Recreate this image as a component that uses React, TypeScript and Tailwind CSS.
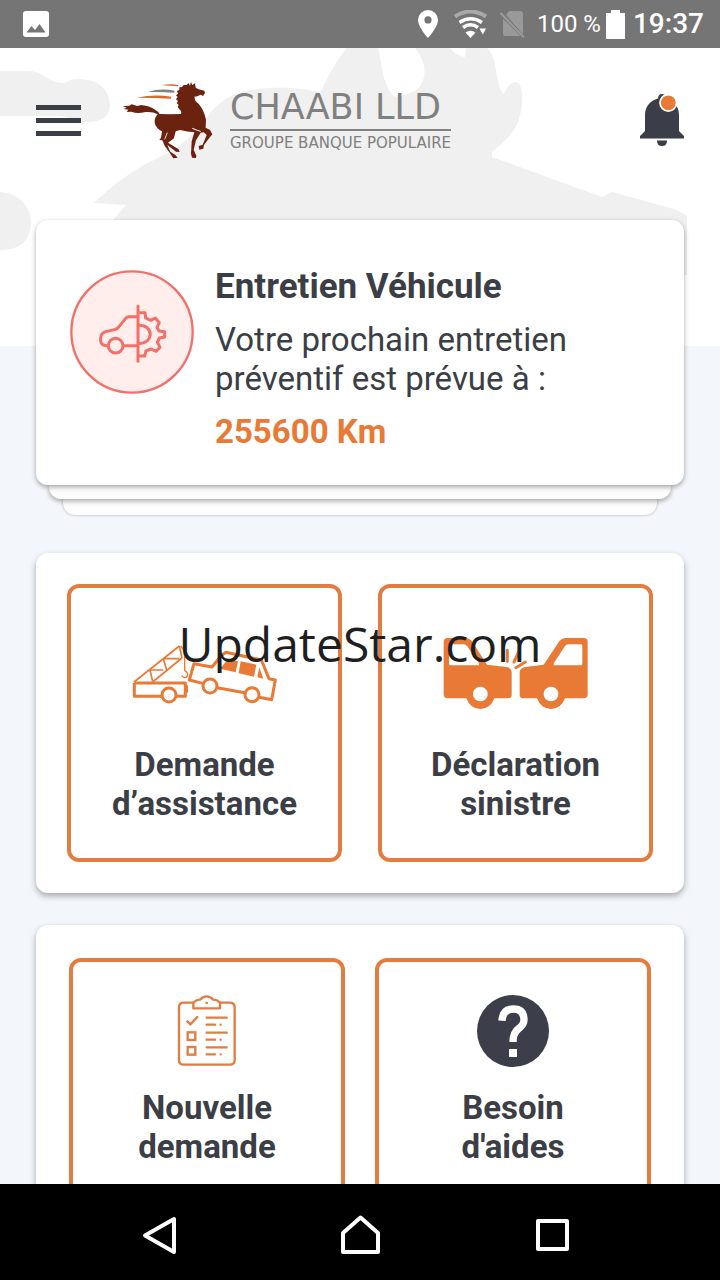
import type { ReactNode } from "react"

type Tile = {
	id: string
	lines: [string, string]
	icon: ReactNode
}

const emergencyTiles: Tile[] = [
	{ id: "assistance", lines: ["Demande", "d’assistance"], icon: <TowIcon /> },
	{ id: "sinistre", lines: ["Déclaration", "sinistre"], icon: <CrashIcon /> },
]

const serviceTiles: Tile[] = [
	{ id: "demande", lines: ["Nouvelle", "demande"], icon: <ClipboardIcon /> },
	{ id: "aide", lines: ["Besoin", "d'aides"], icon: <HelpIcon /> },
]

export default function App() {
	return (
		<div className="relative flex h-screen flex-col overflow-hidden bg-[#f3f6fa] font-['Roboto',sans-serif] text-[#3c3e46]">
			<StatusBar />
			<main className="relative min-h-0 flex-1 overflow-hidden">
				<HeaderArt />
				<div className="relative">
					<Header />
					<div className="px-9 pt-7">
						<MaintenanceCard />
						<section className="mt-[38px] grid grid-cols-2 gap-9 rounded-xl bg-white p-[31px] shadow-[0_3px_6px_rgba(0,0,0,0.32)]">
							{emergencyTiles.map((tile) => (
								<TileButton key={tile.id} tile={tile} className="gap-[35px] pt-12 pb-[35px]" />
							))}
						</section>
						<section className="mt-8 grid grid-cols-2 gap-[30px] rounded-xl bg-white p-[33px] shadow-[0_3px_6px_rgba(0,0,0,0.32)]">
							{serviceTiles.map((tile) => (
								<TileButton key={tile.id} tile={tile} className="gap-5 pt-8 pb-[35px]" />
							))}
						</section>
					</div>
				</div>
			</main>
			<NavigationBar />
			<div className="pointer-events-none absolute inset-0 flex items-center justify-center pt-2">
				<span className="font-['Open_Sans',sans-serif] text-[48px] leading-[72px] text-[#1f1f1f]">UpdateStar.com</span>
			</div>
		</div>
	)
}

function StatusBar() {
	return (
		<div className="flex h-12 shrink-0 items-center bg-[#757575] pr-4 pl-[23px] text-white">
			<svg className="size-[26px]" viewBox="0 0 26 26">
				<rect width="26" height="26" rx="3" fill="#fff" />
				<path d="M3.5 21.5 8.5 15l3.500 4L16.500 13l6 8.500z" fill="#757575" />
			</svg>
			<svg className="ml-auto h-7 w-5" viewBox="0 0 20 28" fill="#fff">
				<path
					fillRule="evenodd"
					d="M10 0a10 10 0 0 0-10 10c0 7 10 18 10 18s10-11 10-18A10 10 0 0 0 10 0zm0 6.300a3.600 3.600 0 1 1 0 7.200 3.600 3.600 0 0 1 0-7.200z"
				/>
			</svg>
			<svg className="ml-4 h-7 w-[33px]" viewBox="0 0 33 28" fill="none">
				<path d="M1 6.500Q16.500-3.500 32 6.500" stroke="#a9a9a9" strokeWidth="4" />
				<path d="M5.500 12.500Q16.500 5 28 12.500" stroke="#fff" strokeWidth="3.500" />
				<path d="M9 17.500Q16.500 12 24 17.500" stroke="#fff" strokeWidth="3.500" />
				<path d="M11.500 22.500Q16.500 19 21.500 22.500L16.500 28z" fill="#fff" />
				<path d="M25.500 18.500h6.500l-3.200 6z" fill="#fff" />
			</svg>
			<svg className="ml-3 h-7 w-[26px]" viewBox="0 0 26 28">
				<path d="M10 1h11a3 3 0 0 1 3 3v20.500L7 5zM4 8.500 21.500 26H6a2 2 0 0 1-2-2z" fill="#999" />
				<path d="M1.500 3 25 27.500" stroke="#999" strokeWidth="2.200" />
			</svg>
			<span className="ml-3 text-[24px] leading-7">100 %</span>
			<svg className="ml-[5px] h-[29px] w-[19px]" viewBox="0 0 19 29" fill="#fff">
				<path d="M5 0h9v3h5v26H0V3h5z" />
			</svg>
			<span className="ml-2 font-medium text-[28px] leading-8">19:37</span>
		</div>
	)
}

function HeaderArt() {
	return (
		<div className="absolute inset-x-0 top-0 bg-white">
			<svg className="w-full" viewBox="0 0 720 298" fill="#f0f0f0" aria-hidden="true">
				<path d="M0 23H30C44 24 47 34 62 35C70 35 68 30 80 31C98 32 109 40 110 57C110 70 98 75 84 74C74 74 70 68 58 68H0z" />
				<path d="M0 144C18 145 31 158 31 175C31 192 20 202 0 202z" />
				<path
					fillRule="evenodd"
					d="M94 155C115 135 132 122 160 109C180 100 196 85 208 68C222 49 240 41 270 40C290 39 305 41 320 44C328 31 334 14 347 0H450Q456 8 465 9L466 0H487C498 10 494 31 503 46C508 43 506 35 516 34C526 38 522 63 518 74C513 87 502 96 492 104V109L602 149L612 144L674 161Q687 166 687 170V227H60L113 172L126 157zM378 0C382 16 382 34 392 46C398 53 407 45 415 43C425 36 426 24 423 14Q420 6 415 0z"
				/>
			</svg>
		</div>
	)
}

function Header() {
	return (
		<header className="flex h-36 items-center px-9">
			<button type="button" aria-label="Menu" className="flex w-[45px] flex-col gap-2">
				<span className="h-[5px] bg-[#3c3e46]" />
				<span className="h-[5px] bg-[#3c3e46]" />
				<span className="h-[5px] bg-[#3c3e46]" />
			</button>
			<div className="ml-[41px] flex items-center gap-4 text-[#808080]">
				<HorseLogo />
				<div className="font-['DejaVu_Sans',sans-serif]">
					<div className="border-[#808080] border-b-2 pb-1 text-[35px] leading-9">CHAABI LLD</div>
					<div className="mt-1 text-[15px] leading-4">GROUPE BANQUE POPULAIRE</div>
				</div>
			</div>
			<button type="button" aria-label="Notifications" className="ml-auto">
				<svg className="h-[52px] w-11" viewBox="0 0 44 52">
					<path
						d="M22 0c-2.500 0-4 2-4 4.500C10 6.500 5 13 5 21v16l-5 5v2.500h44V42l-5-5V21c0-8-5-14.500-13-16.500C26 2 24.500 0 22 0z"
						fill="#3b3d49"
					/>
					<path d="M17 46.500h10q0 5.500-5 5.500t-5-5.500z" fill="#3b3d49" />
					<circle cx="28.300" cy="8.800" r="8.300" fill="#e87a36" stroke="#fff" strokeWidth="1.800" />
				</svg>
			</button>
		</header>
	)
}

function HorseLogo() {
	return (
		<svg className="h-[78px] w-[92px]" viewBox="36 30 276 234">
			<path d="M156 43Q180 36 206 43Q204 48 196 45z" fill="#d9652a" />
			<path d="M114 63Q150 51 194 59L192 65Q160 62 114 63z" fill="#7f8487" />
			<path d="M81 80Q130 69 184 77L183 83Q130 80 81 80z" fill="#e0692a" />
			<path
				d="M38 106L58 104L65 100L82 105L94 102Q120 105 132 114Q145 122 149 129Q178 130 213 129Q216 121 208 115L203 107L206 102L200 96L204 91L198 84L203 79L198 73L204 68L201 60L208 57L208 49L216 48L221 42L229 42L236 37L240 44L243 33L247 42L255 37L257 50L266 55L283 59L285 66L279 75L272 71L262 76L253 77L256 89L267 100Q283 120 288 146L287 170L300 177L307 190L296 203L282 222L280 233L268 236L266 225L278 221L290 192L281 184L272 185L258 208L251 236L259 254L258 261L246 260L243 248L244 230L245 211L253 184Q232 183 210 177L197 181L192 202L174 215L190 225L206 235L209 243L198 242L172 222L181 242L196 252L203 260L190 262L180 247L164 224L157 208L148 207L153 200L156 181Q137 171 134 155Q132 142 143 130Q128 121 107 123Q80 129 65 122L50 123L55 116L41 114L50 110z"
				fill="#6b2310"
			/>
			<path d="M247 172L262 178L272 181" stroke="#fff" strokeWidth="3" fill="none" />
			<path d="M172 185L164 205" stroke="#fff" strokeWidth="2.500" />
		</svg>
	)
}

function MaintenanceCard() {
	return (
		<section>
			<div className="relative z-20 flex gap-[21px] rounded-xl bg-white pt-[47px] pr-6 pb-[34px] pl-[34px] shadow-[0_2px_5px_rgba(0,0,0,0.35)]">
				<CarServiceIcon />
				<div className="text-[33px] leading-[39px]">
					<h2 className="font-bold text-[35px]">Entretien Véhicule</h2>
					<p className="mt-[14px]">
						Votre prochain entretien
						<br />
						préventif est prévue à :
					</p>
					<p className="mt-[14px] font-bold text-[#e87a36]">255600 Km</p>
				</div>
			</div>
			{/* edges of the cards stacked underneath */}
			<div className="relative z-10 mx-[13px] h-[14px] rounded-b-xl bg-[#fcfcfc] shadow-[0_2px_5px_rgba(0,0,0,0.35)]" />
			<div className="mx-[27px] h-4 rounded-b-xl bg-[#fcfcfc] shadow-[0_0_3px_rgba(0,0,0,0.3)]" />
		</section>
	)
}

function TileButton({ tile, className }: { tile: Tile; className: string }) {
	return (
		<button
			type="button"
			className={`flex flex-col items-center rounded-xl border-4 border-[#e27c40] font-bold text-[33px] leading-[39px] ${className}`}
		>
			{tile.icon}
			<span>
				{tile.lines[0]}
				<br />
				{tile.lines[1]}
			</span>
		</button>
	)
}

function CarServiceIcon() {
	return (
		<svg
			className="mt-[3px] size-[124px] shrink-0"
			viewBox="30 30 372 372"
			fill="none"
			stroke="#f27068"
			strokeWidth="9"
			strokeLinecap="round"
			strokeLinejoin="round"
		>
			<circle cx="216" cy="216" r="182" fill="#ffeeec" strokeWidth="7" />
			<path d="M234 138V304" />
			<path d="M232 170H206Q201 170 197 175L177 200Q173 206 166 208L137 215Q122 220 122 234V244Q124 256 138 257H144M191 257H232" />
			<circle cx="167" cy="257" r="22" />
			<path d="M236 158H255L257 174L272 181L286 174L298 188L291 202L297 213L314 215V231L298 234L292 247L300 262L288 274L273 267L258 273L254 288H236" />
			<path d="M236 196Q268 196 271 224Q268 250 236 251" />
		</svg>
	)
}

function TowIcon() {
	return (
		<svg className="h-[74px] w-[150px]" viewBox="30 46 450 222" fill="none" stroke="#e87a36">
			<path d="M42 184L178 76M98 184L186 112M90 148L98 182M90 148H130M130 114L140 148M132 114H178M178 76L186 112" strokeWidth="5" />
			<path d="M182 76L194 90V150Q206 156 202 166Q194 176 185 165" strokeWidth="4" />
			<path d="M43 187H196V227H170M125 227H43z" strokeWidth="9" strokeLinejoin="round" />
			<path d="M43 187V227" strokeWidth="9" />
			<path d="M200 194V216" strokeWidth="8" />
			<circle cx="147" cy="223" r="21" strokeWidth="9" />
			<path
				d="M248 188L208 178L222 129L276 139L303 106L318 95L424 118L447 174L466 178L455 237L418 230M374 216L292 201"
				strokeWidth="9"
				strokeLinejoin="round"
			/>
			<circle cx="270" cy="196" r="21" strokeWidth="9" />
			<circle cx="396" cy="222" r="21" strokeWidth="9" />
			<path d="M300 144L324 116L354 122L347 155zM362 122L409 132L402 168L356 158zM418 140L430 174L412 170z" fill="#e87a36" stroke="none" />
		</svg>
	)
}

function CrashIcon() {
	return (
		<svg className="h-[74px] w-[150px]" viewBox="184 48 450 222" fill="#e87a36">
			<path
				fillRule="evenodd"
				d="M204 54H260Q272 56 280 68L322 134L380 141Q396 144 396 158V224Q396 235 384 235H344Q332 267 302 267Q272 267 260 235H204Q192 235 192 223V66Q192 54 204 54zM212 73Q208 73 208 78V131Q208 136 213 136H294Q300 136 297 128L262 78Q258 73 252 73zM302 200a22 22 0 1 0 .1 0z"
			/>
			<path
				fillRule="evenodd"
				d="M612 54H556Q544 56 536 68L492 134L436 141Q420 144 420 158V224Q420 235 432 235H472Q484 267 514 267Q544 267 556 235H612Q624 235 624 223V66Q624 54 612 54zM604 73Q608 73 608 78V131Q608 136 603 136H526Q520 136 523 128L556 78Q560 73 566 73zM514 200a22 22 0 1 0 .1 0z"
			/>
			<path d="M383 91V124M416 98L403 126M437 126L409 143" stroke="#e87a36" strokeWidth="9" strokeLinecap="round" />
		</svg>
	)
}

function ClipboardIcon() {
	return (
		<svg className="size-[74px]" viewBox="31 40 222 222" fill="none" stroke="#e27c40" strokeWidth="7" strokeLinecap="round">
			<path d="M101 66H72Q58 66 58 80V238Q58 252 72 252H210Q225 252 225 238V80Q225 66 210 66H181" />
			<path d="M101 83V66Q108 58 121 57Q130 47 141 47T161 57Q174 58 181 66V83z" strokeLinejoin="round" />
			<circle cx="141" cy="67" r="4" fill="#e27c40" stroke="none" />
			<path d="M83 122L92 131L113 109" />
			<rect x="84" y="155" width="23" height="23" />
			<rect x="84" y="199" width="23" height="23" />
			<path d="M141 111H201M141 132H166M183 132h.1M141 156H201M141 177H166M183 177h.1M141 200H201M141 221H166M183 221h.1" />
		</svg>
	)
}

function HelpIcon() {
	return (
		<svg className="size-[74px]" viewBox="48 42 222 222">
			<circle cx="159" cy="153" r="108" fill="#3c3e49" />
			<path d="M126 122Q128 87 160 87Q192 87 192 120Q192 133 177 145Q159 158 159 186" fill="none" stroke="#fff" strokeWidth="22" />
			<path d="M147 207h24v24h-24z" fill="#fff" />
		</svg>
	)
}

function NavigationBar() {
	return (
		<nav className="flex h-24 shrink-0 items-center justify-between bg-black px-[136px]">
			<button type="button" aria-label="Retour">
				<svg className="size-12" viewBox="0 0 48 48" fill="none" stroke="#fff" strokeWidth="4" strokeLinejoin="round">
					<path d="M38 11V44L9 27.500z" />
				</svg>
			</button>
			<button type="button" aria-label="Accueil">
				<svg className="size-12" viewBox="0 0 48 48" fill="none" stroke="#fff" strokeWidth="4" strokeLinejoin="round">
					<path d="M24.500 9.500L42 25V44H7V25z" />
				</svg>
			</button>
			<button type="button" aria-label="Applications récentes">
				<svg className="size-12" viewBox="0 0 48 48" fill="none" stroke="#fff" strokeWidth="4" strokeLinejoin="round">
					<path d="M2 13h29v28H2z" />
				</svg>
			</button>
		</nav>
	)
}
